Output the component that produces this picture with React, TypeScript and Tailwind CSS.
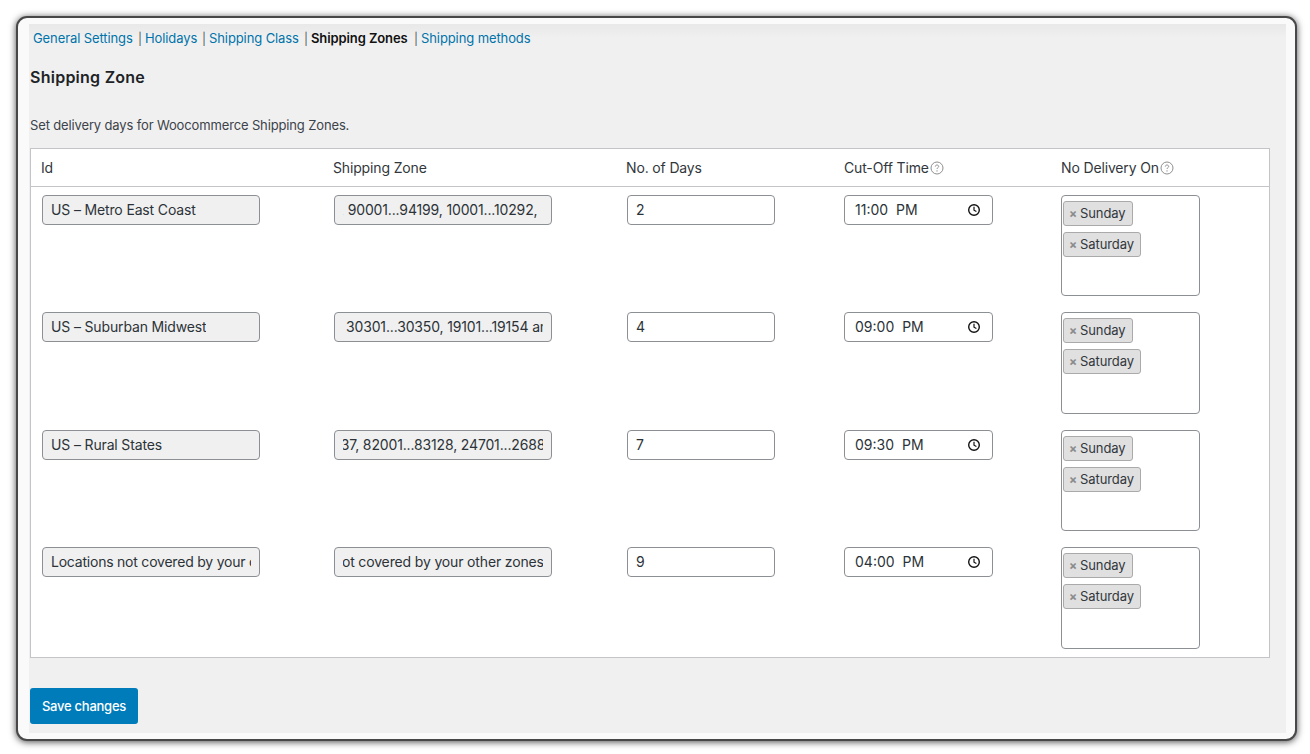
import React from "react";

const rows = [
  { id: "US – Metro East Coast", idTrack: "", zone: ", 90001...94199, 10001...10292,", zoneShift: "-ml-[3px]", days: "2", time: "11:00", h: "h-[117px]", sel: "h-[101px]" },
  { id: "US – Suburban Midwest", idTrack: "", zone: "30301...30350, 19101...19154 and more", zoneShift: "ml-[3px]", days: "4", time: "09:00", h: "h-[118px]", sel: "h-[102px]" },
  { id: "US – Rural States", idTrack: "", zone: "33037, 82001...83128, 24701...26886", zoneShift: "-ml-[28px]", days: "7", time: "09:30", h: "h-[117px]", sel: "h-[101px]" },
  { id: "Locations not covered by your other zones", idTrack: "tracking-[-0.22px]", zone: "Locations not covered by your other zones", zoneShift: "-ml-[76px]", days: "9", time: "04:00", h: "h-[118px]", sel: "h-[102px]" },
];

function Help() {
  return (
    <svg width="14" height="14" viewBox="0 0 14 14" fill="none" className="ml-[1px] shrink-0">
      <circle cx="7" cy="7" r="6" stroke="#8f8f8f" strokeWidth="1" />
      <path d="M5.3 5.6c0-1 .8-1.6 1.7-1.6s1.7.6 1.7 1.5c0 1.2-1.7 1.2-1.7 2.5" stroke="#8f8f8f" strokeWidth="1" />
      <circle cx="7" cy="9.9" r=".7" fill="#8f8f8f" />
    </svg>
  );
}

function Clock() {
  return (
    <svg width="14" height="14" viewBox="0 0 14 14" fill="none">
      <circle cx="7" cy="7" r="5.3" stroke="#111" strokeWidth="1.4" />
      <path d="M7 3.8V7.2L9.4 8.6" stroke="#111" strokeWidth="1.2" />
    </svg>
  );
}

function Tag({ label }: { label: string }) {
  return (
    <div className="flex h-[25px] w-fit items-center rounded-[3px] border border-[#aaaaaa] bg-[#e0e0e0] pl-[5px] pr-[6px] text-[13px] tracking-[-0.1px] text-[#32373c]">
      <span className="mr-[3px] text-[12px] font-bold leading-none text-[#8a8a8a]">×</span>
      {label}
    </div>
  );
}

function Sep() {
  return <span className="w-[7px] text-[12px] text-[#50575e]">|</span>;
}

export default function App() {
  return (
    <div className="h-[754px] w-[1310px] overflow-hidden bg-white pl-[16px] pt-[16px] font-['Inter',sans-serif] text-[13px] tracking-[-0.1px] text-[#3c434a]">
      <div className="h-[725px] w-[1281px] rounded-[11px] border-2 border-[#484848] bg-[#fafafa] pb-[6px] pl-[11px] pr-[9px] pt-[6px] shadow-[0_1px_7px_rgba(0,0,0,0.7)]">
        <div className="h-full w-full bg-[linear-gradient(#e8e8e8,#f0f0f0_14px)]">
          <div className="flex h-[29px] items-center pl-[4px] text-[#0073aa]">
            <a className="w-[105px]">General Settings</a>
            <Sep />
            <a className="w-[57px]">Holidays</a>
            <Sep />
            <a className="w-[95px]">Shipping Class</a>
            <Sep />
            <b className="w-[103px] font-semibold text-[#111]">Shipping Zones</b>
            <Sep />
            <a>Shipping methods</a>
          </div>
          <h2 className="mt-[14px] pl-[1px] text-[16px] font-semibold leading-[20px] tracking-[0.25px] text-[#1d2327]">Shipping Zone</h2>
          <p className="mt-[28px] pl-[1px] leading-[20px] tracking-[-0.14px]">Set delivery days for Woocommerce Shipping Zones.</p>
          <div className="ml-[1px] mt-[13px] h-[510px] w-[1240px] border border-[#c3c4c7] bg-white text-[14px] tracking-[-0.15px]">
            <div className="flex h-[38px] items-center border-b border-[#c3c4c7] pl-[10px] text-[#32373c]">
              <div className="w-[292px]">Id</div>
              <div className="w-[293px]">Shipping Zone</div>
              <div className="w-[218px]">No. of Days</div>
              <div className="flex w-[217px] items-center">Cut-Off Time<Help /></div>
              <div className="flex items-center">No Delivery On<Help /></div>
            </div>
            {rows.map((r) => (
              <div key={r.days} className={`flex ${r.h} pl-[11px] pt-[8px] text-[#2c3338]`}>
                <div className="w-[292px]">
                  <div className="flex h-[30px] w-[218px] items-center rounded-[4px] border border-[#8c8f94] bg-[#f0f0f0] px-[8px] pb-[1px]">
                    <div className={`overflow-hidden whitespace-nowrap ${r.idTrack}`}>{r.id}</div>
                  </div>
                </div>
                <div className="w-[293px]">
                  <div className="flex h-[30px] w-[218px] items-center rounded-[4px] border border-[#8c8f94] bg-[#f0f0f0] px-[8px] pb-[1px]">
                    <div className="w-full overflow-hidden whitespace-nowrap">
                      <span className={`inline-block ${r.zoneShift}`}>{r.zone}</span>
                    </div>
                  </div>
                </div>
                <div className="w-[217px]">
                  <div className="flex h-[30px] w-[148px] items-center rounded-[4px] border border-[#8c8f94] bg-white px-[8px] pb-[1px]">{r.days}</div>
                </div>
                <div className="w-[217px]">
                  <div className="flex h-[30px] w-[149px] items-center justify-between rounded-[4px] border border-[#8c8f94] bg-white pb-[1px] pl-[10px] pr-[11px] tracking-normal">
                    <span className="whitespace-pre [word-spacing:4px]">{r.time} PM</span>
                    <Clock />
                  </div>
                </div>
                <div className={`flex ${r.sel} w-[139px] flex-col gap-[6px] rounded-[4px] border border-[#8c8f94] bg-white pl-[1px] pt-[5px]`}>
                  <Tag label="Sunday" />
                  <Tag label="Saturday" />
                </div>
              </div>
            ))}
          </div>
          <button className="ml-[1px] mt-[30px] h-[36px] w-[108px] rounded-[3px] bg-[#007cba] pt-[1px] text-[13px] font-medium tracking-[-0.25px] text-white">Save changes</button>
        </div>
      </div>
    </div>
  );
}
